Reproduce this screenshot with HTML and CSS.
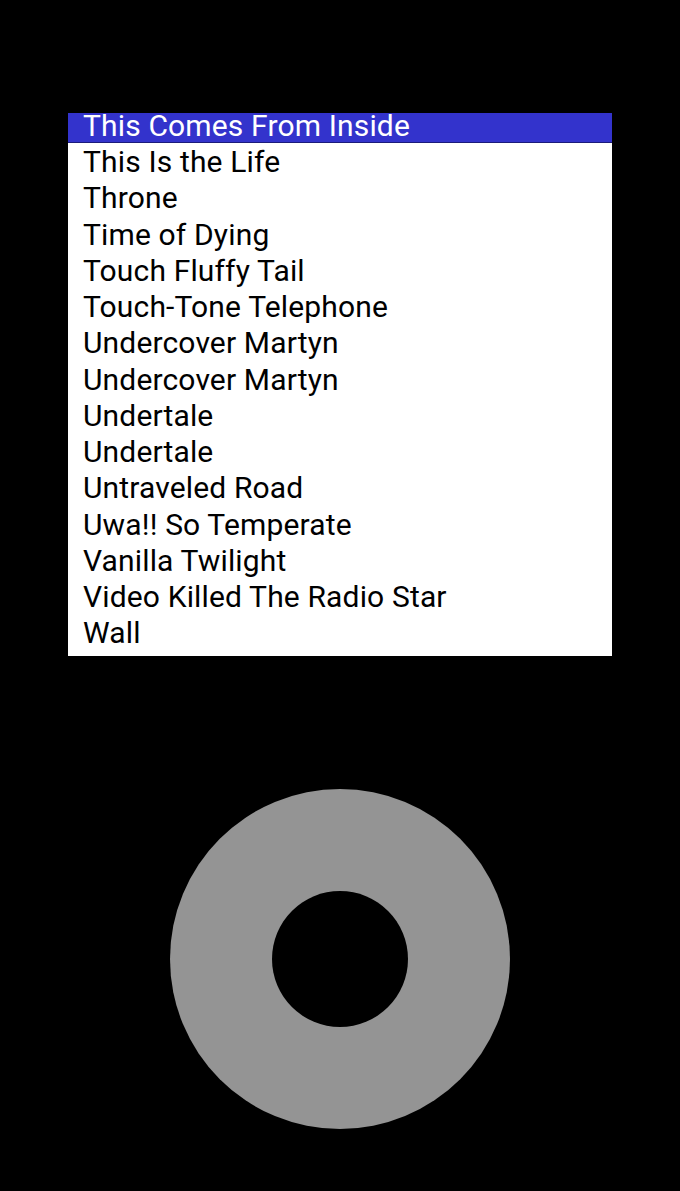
FILE: index.html
```html
<!DOCTYPE html>
<html>
<head>
<meta charset="utf-8">
<link rel="stylesheet" href="styles.css">
</head>
<body>
<div class="device">
  <div class="screen">
    <div class="item selected">This Comes From Inside</div>
    <div class="item">This Is the Life</div>
    <div class="item">Throne</div>
    <div class="item">Time of Dying</div>
    <div class="item">Touch Fluffy Tail</div>
    <div class="item">Touch-Tone Telephone</div>
    <div class="item">Undercover Martyn</div>
    <div class="item">Undercover Martyn</div>
    <div class="item">Undertale</div>
    <div class="item">Undertale</div>
    <div class="item">Untraveled Road</div>
    <div class="item">Uwa!! So Temperate</div>
    <div class="item">Vanilla Twilight</div>
    <div class="item">Video Killed The Radio Star</div>
    <div class="item">Wall</div>
  </div>
  <div class="wheel"><div class="hole"></div></div>
</div>
</body>
</html>
```
FILE: styles.css
```css
html, body {
  margin: 0;
  padding: 0;
  background: #000;
}
.device {
  width: 680px;
  height: 1191px;
  display: flex;
  flex-direction: column;
  align-items: center;
  padding-top: 113px;
  box-sizing: border-box;
}
.screen {
  width: 544px;
  height: 543px;
  background: #fff;
  overflow: hidden;
  font-family: Roboto, "Liberation Sans", sans-serif;
  font-size: 30px;
  letter-spacing: 0.15px;
  color: #000;
}
.item {
  height: 36.25px;
  line-height: 36.25px;
  padding-left: 15px;
  white-space: nowrap;
}
.item.selected {
  height: 29px;
  line-height: 26px;
  background: #3333cc;
  color: #fff;
  border-bottom: 1px solid #1c1c7a;
  margin-bottom: 1px;
}
.wheel {
  margin-top: 133px;
  width: 340px;
  height: 340px;
  border-radius: 50%;
  background: #949494;
  display: flex;
  align-items: center;
  justify-content: center;
}
.hole {
  width: 136px;
  height: 136px;
  border-radius: 50%;
  background: #000;
}
```
